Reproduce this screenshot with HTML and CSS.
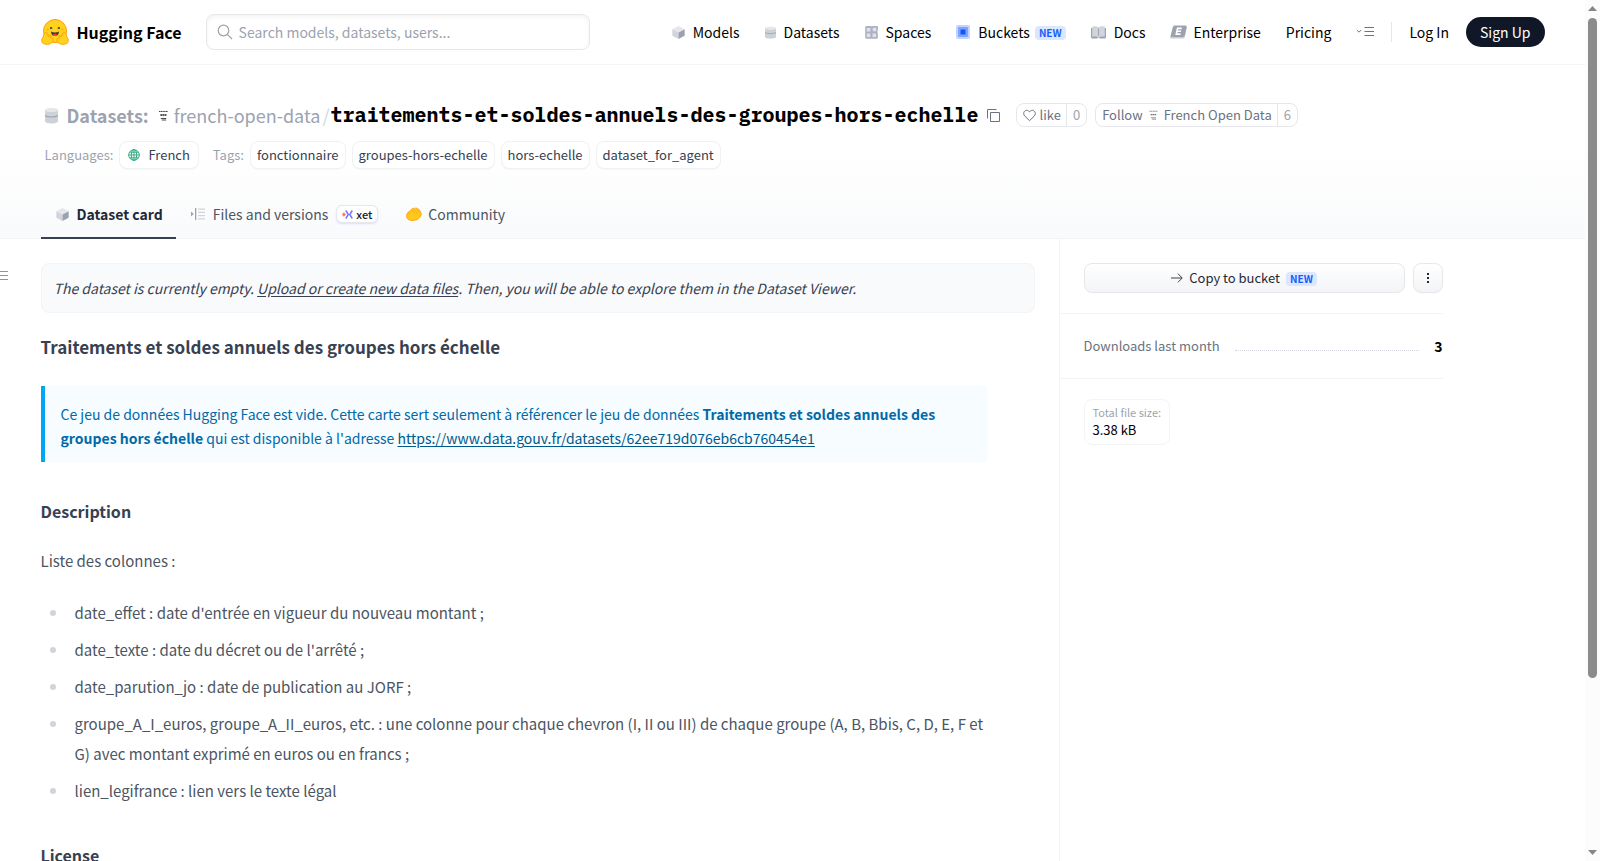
FILE: index.html
```html
<!DOCTYPE html>
<html lang="en">
<head>
<meta charset="utf-8">
<meta name="viewport" content="width=device-width, initial-scale=1">
<title>french-open-data/traitements-et-soldes-annuels-des-groupes-hors-echelle · Datasets at Hugging Face</title>
<link rel="stylesheet" href="styles.css">
</head>
<body>
<svg class="defs" aria-hidden="true">
  <symbol id="i-cube" viewBox="0 0 12 12"><path fill="#e5e7eb" d="M6 0l5.700 2.900L6 6 .3 2.900z"/><path fill="#d1d5db" d="M.3 2.900L6 6v6L.3 9z"/><path fill="#9ca3af" d="M11.700 2.900V9L6 12V6z"/></symbol>
  <symbol id="i-data" viewBox="0 0 12 16" preserveAspectRatio="none"><path fill="#e5e7eb" d="M0 2.500C0 .3 12 .3 12 2.500V8H0z"/><path fill="#cdd1d8" d="M0 3.500c2 1.600 10 1.600 12 0v10c0 2.800-12 2.800-12 0z"/><path fill="none" stroke="#9ca3af" d="M0 8c2 1.800 10 1.800 12 0"/></symbol>
  <symbol id="i-org" viewBox="0 0 10 12"><g fill="none" stroke="currentColor"><path stroke-dasharray="1.500 .4" d="M0 1.500h10"/><path stroke-width="1.700" stroke-dasharray="2 .4" d="M1.500 5.500h7"/><path d="M2 9.300h6M3 11h5" stroke-width=".9"/></g></symbol>
</svg>
<div class="shell">
<div class="page">
  <header class="topbar">
    <div class="container topbar-row">
      <a class="brand" href="#">
        <svg width="28" height="26" viewBox="0 0 28 26" aria-hidden="true"><circle cx="14" cy="12" r="11.500" fill="#ffd21e" stroke="#ff9d0b"/><path fill="#3a3b45" d="M9.300 8.300c.9-.9 2.300 0 2.200 1.500-.8-.7-1.200.8-1.900.3-.6-.4-.7-1.300-.3-1.800zm9.400 0c-.9-.9-2.300 0-2.200 1.500.8-.7 1.200.8 1.900.3.6-.4.7-1.300.3-1.800z"/><circle cx="6.600" cy="10.400" r="1" fill="#ffad03"/><circle cx="21.400" cy="10.400" r="1" fill="#ffad03"/><path fill="#3a3b45" d="M10 12.500c2.500 1.300 5.500 1.300 8 0 0 3-1.800 4.500-4 4.500s-4-1.500-4-4.500z"/><path fill="#f94040" d="M11.500 15.900c1.500-1.400 3.500-1.400 5 0-1.300 1.300-3.700 1.300-5 0z"/><path fill="#ffd21e" stroke="#ff9d0b" stroke-width=".9" d="M4.500 13.500c1.300-.5 1.700 1 2 3 .6-1 1.600-.9 1.500.2l-.1 1c1-1.700 2.700-1.500 2.200.2l-.6 1.200c2.300-1.200 3.300 1.500 1.900 4-1.600 2.600-6 2.700-8.700 1.600-1.400-.6-2.500-1.800-1.800-2.900-.7-.9-.3-1.800.5-2-.5-1 .1-1.800 1-1.800-.1-2 .9-4.200 2.100-4.500zm19 0c-1.300-.5-1.700 1-2 3-.6-1-1.600-.9-1.500.2l.1 1c-1-1.700-2.700-1.500-2.200.2l.6 1.200c-2.300-1.200-3.300 1.500-1.900 4 1.600 2.600 6 2.700 8.700 1.600 1.400-.6 2.500-1.800 1.800-2.900.7-.9.3-1.800-.5-2 .5-1-.1-1.800-1-1.800.1-2-.9-4.200-2.100-4.500z"/></svg>
        <span>Hugging Face</span>
      </a>
      <div class="search">
        <svg width="16" height="16" viewBox="0 0 16 16" fill="none" stroke="#9ca3af" stroke-width="1.200" aria-hidden="true"><circle cx="6.500" cy="6.500" r="5.300"/><path d="M10.300 10.300l4.700 4.700"/></svg>
        <input type="search" aria-label="Search" placeholder="Search models, datasets, users...">
      </div>
      <nav class="nav" aria-label="Main">
        <a href="#"><svg width="13" height="13"><use href="#i-cube"/></svg>Models</a>
        <a href="#"><svg width="11" height="13"><use href="#i-data"/></svg>Datasets</a>
        <a href="#"><svg width="13" height="13" viewBox="0 0 13 13"><path fill="#adb3c2" d="M1 0h5.500v.8A3.400 3.400 0 0 1 12.800 4c0 1-.4 1.800-.8 2.300h.8V12l-.8.800H1L.2 12V1z"/><g fill="#dfe2e8"><rect x="1.800" y="2" width="3.500" height="3.500"/><rect x="1.800" y="7.500" width="3.500" height="3.500"/><rect x="7.500" y="7.500" width="3.500" height="3.500"/><circle cx="9.500" cy="3.600" r="2"/></g></svg>Spaces</a>
        <a href="#"><svg width="14" height="14" viewBox="0 0 14 14"><rect width="14" height="14" rx="2" fill="#c3d5ff"/><rect x="2" y="2" width="10" height="10" rx="1" fill="#7ca5ff"/><rect x="4.500" y="4.500" width="5" height="5" rx=".5" fill="#1456f5"/></svg>Buckets <span class="new">NEW</span></a>
        <a href="#"><svg width="15" height="13" viewBox="0 0 15 13"><path fill="#9ca3af" d="M0 2h15v9.500l-1 1H9l-1.500-1-1.500 1H1l-1-1z"/><path fill="#d1d5db" d="M1.200.8C3.500 0 6 .2 7.500 1.500 9 .2 11.500 0 13.800.8v10c-2.300-.6-4.800-.4-6.300.9-1.500-1.300-4-1.500-6.300-.9z"/><path stroke="#9ca3af" d="M7.500 2.500v7.300"/></svg>Docs</a>
        <a href="#" class="tight"><svg width="17" height="14" viewBox="0 0 17 14"><path fill="#c9cdd6" d="M3 3l14-1-2 9.500c-.3 1.500-1 2-2.300 2H1.500C.3 13.500 0 13 .2 12z"/><path fill="#9ca3af" d="M5.500.5h9.800c1.200 0 1.500.8 1.300 1.700l-1.800 8c-.3 1.200-1 1.800-2.200 1.800H2C.8 12 .6 11.300.8 10.400l1.900-8C3 1.100 4 .5 5.500.5z"/><path fill="none" stroke="#fff" stroke-width="1.600" d="M11.800 3.400H7.600L6.300 9.100h4.200M7 6.200h4"/></svg>Enterprise</a>
        <a href="#">Pricing</a>
      </nav>
      <button class="more" aria-label="More"><svg width="18" height="12" viewBox="0 0 18 12" fill="none" stroke="#6b7280"><path d="M.8 4l2.200 2.200L5.200 4M8.500 1.500H18M8.500 5.500H18M8.500 9.500H18"/></svg></button>
      <span class="sep"></span>
      <a class="login" href="#">Log In</a>
      <a class="signup" href="#">Sign Up</a>
    </div>
  </header>

  <section class="hero">
    <div class="container">
      <div class="title-row">
        <svg class="title-icon" width="13" height="17"><use href="#i-data"/></svg>
        <a class="kind" href="#">Datasets:</a>
        <svg class="org" width="9" height="11"><use href="#i-org"/></svg>
        <a class="owner" href="#">french-open-data</a>
        <span class="slash">/</span>
        <h1><a href="#">traitements-et-soldes-annuels-des-groupes-hors-echelle</a></h1>
        <button class="copy" aria-label="Copy dataset name"><svg width="13" height="13" viewBox="0 0 13 13" fill="none" stroke="#6b7280"><path d="M3.500 3.500h9v9h-9zM.5 9.500v-9h9"/></svg></button>
        <div class="pill like">
          <button><svg width="13" height="13" viewBox="0 0 13 13" fill="none" stroke="#6b7280"><path d="M6.500 11.700L1.600 6.900C-.7 4.100 1.800.4 4.700 1.500c.7.300 1.300.8 1.800 1.400.5-.6 1.100-1.100 1.800-1.400 2.900-1.100 5.400 2.600 3.100 5.400z"/></svg>like</button><a href="#">0</a>
        </div>
        <div class="pill">
          <button>Follow <svg class="grey" width="9" height="10"><use href="#i-org"/></svg>French Open Data</button><a href="#">6</a>
        </div>
      </div>
      <div class="tags">
        <span class="label">Languages:</span>
        <a class="tag lang" href="#"><svg width="12" height="12" viewBox="0 0 12 12" fill="none" stroke="#36ab83"><circle cx="6" cy="6" r="5.300"/><path d="M6 .5v11M.5 6h11M1.500 3.200h9M1.500 8.800h9" /><ellipse cx="6" cy="6" rx="2.700" ry="5.300"/></svg>French</a>
        <span class="label tags-label">Tags:</span>
        <a class="tag" href="#">fonctionnaire</a>
        <a class="tag" href="#">groupes-hors-echelle</a>
        <a class="tag" href="#">hors-echelle</a>
        <a class="tag" href="#">dataset_for_agent</a>
      </div>
      <nav class="tabs" aria-label="Dataset">
        <a class="tab active" href="#"><svg width="13" height="13"><use href="#i-cube"/></svg>Dataset card</a>
        <a class="tab" href="#"><svg width="14" height="12" viewBox="0 0 14 12"><path fill="#9ca3af" d="M0 3.500L2.800 6 0 8.500zM4 0h1.300v12H4z"/><path stroke="#cfd3da" stroke-width="1.300" d="M7 1.200h7M7 4.400h7M7 7.600h7M7 10.800h7"/></svg>Files and versions
          <span class="xet"><svg width="11" height="9" viewBox="0 0 11 9" fill="none"><path fill="#ff7a59" d="M1.800 2.300L4 4.500 1.800 6.700 0 4.500z"/><path stroke="#7875ff" stroke-width="1.500" d="M3.800.5L6.300 4.500 3.800 8.500M10.300.5L7.800 4.500l2.500 4"/></svg>xet</span></a>
        <a class="tab community" href="#"><svg width="16" height="14" viewBox="0 0 16 14"><path fill="#ffc91c" stroke="#ffa41c" d="M3 4.800L6.300 1.500c1-.9 2.100 0 1.700 1C9.500.3 11.400.6 11 2.200c1.700-.8 2.700.4 1.900 1.700 1.600-.4 2.300.9 1.600 1.900 1 .2 1.200 1.400.5 2.300-.2 1.700-2.500 4.700-6.800 5.200-3.500.5-6.300-.3-7.200-2.200-.8-1.800-.4-4 .7-5.200.1-.5.700-1.100 1.300-1.100z"/><path fill="none" stroke="#ffa41c" stroke-width=".8" d="M8 2.500L5.300 5.300M11 2.300L7.500 6M12.900 4L9.300 7.400M3 5v3"/></svg>Community</a>
      </nav>
    </div>
  </section>

  <div class="container content">
    <button class="toc" aria-label="Table of contents"><svg width="8" height="9" viewBox="0 0 8 9" stroke="#8d94a3"><path d="M0 .5h8M0 4.500h8M0 8.500h8"/></svg></button>
    <main class="main">
      <div class="notice">The dataset is currently empty. <a href="#">Upload or create new data files</a>. Then, you will be able to explore them in the Dataset Viewer.</div>
      <article class="prose">
        <h2>Traitements et soldes annuels des groupes hors échelle</h2>
        <blockquote>Ce jeu de données Hugging Face est vide. Cette carte sert seulement à référencer le jeu de données <strong>Traitements et soldes annuels des groupes hors échelle</strong> qui est disponible à l'adresse <a href="#">https://www.data.gouv.fr/datasets/62ee719d076eb6cb760454e1</a></blockquote>
        <h3>Description</h3>
        <p>Liste des colonnes :</p>
        <ul>
          <li>date_effet : date d'entrée en vigueur du nouveau montant ;</li>
          <li>date_texte : date du décret ou de l'arrêté ;</li>
          <li>date_parution_jo : date de publication au JORF ;</li>
          <li>groupe_A_I_euros, groupe_A_II_euros, etc. : une colonne pour chaque chevron (I, II ou III) de chaque groupe (A, B, Bbis, C, D, E, F et G) avec montant exprimé en euros ou en francs ;</li>
          <li>lien_legifrance : lien vers le texte légal</li>
        </ul>
        <h3>License</h3>
      </article>
    </main>
    <aside class="side">
      <div class="actions">
        <button class="btn grow"><svg width="12" height="10" viewBox="0 0 12 10" fill="none" stroke="#374151"><path d="M0 5h11M7 .7L11.200 5 7 9.300"/></svg>Copy to bucket <span class="new">NEW</span></button>
        <button class="btn kebab" aria-label="More actions"><svg width="2" height="10" viewBox="0 0 2 10" fill="#1f2937"><path d="M0 0h2v2H0zM0 4h2v2H0zM0 8h2v2H0z"/></svg></button>
      </div>
      <dl class="downloads"><dt>Downloads last month</dt><dd>3</dd></dl>
      <dl class="size"><dt>Total file size:</dt><dd>3.38 kB</dd></dl>
    </aside>
  </div>
</div>
<div class="scrollbar" aria-hidden="true">
  <svg width="9" height="5" viewBox="0 0 9 5"><path fill="#868686" d="M4.500 0L9 5H0z"/></svg>
  <div class="track"><div class="thumb"></div></div>
  <svg width="9" height="5" viewBox="0 0 9 5"><path fill="#868686" d="M4.500 5L9 0H0z"/></svg>
</div>
</div>
</body>
</html>
```
FILE: styles.css
```css
* { box-sizing: border-box; }
body {
  margin: 0;
  font: 14px/24px "Source Sans Pro", "Noto Sans CJK SC", "Noto Sans CJK JP", sans-serif;
  color: #000;
  background: #fff;
}
a { color: inherit; text-decoration: none; }
button { font: inherit; color: inherit; background: none; border: 0; padding: 0; cursor: pointer; }
svg { flex: none; display: block; }
dl, dd { margin: 0; }
.defs { position: absolute; width: 0; height: 0; }

.shell { display: flex; height: 100vh; }
.page { flex: 1; min-width: 0; overflow-y: auto; scrollbar-width: none; display: flex; flex-direction: column; }
.container { width: 100%; max-width: 1536px; margin: 0 auto; padding: 0 16px; }

.topbar { border-bottom: 1px solid #f3f4f6; flex: none; }
.topbar-row { display: flex; align-items: center; height: 64px; }
.brand { display: flex; align-items: center; gap: 8px; font-size: 16px; font-weight: 700; white-space: nowrap; }
.search {
  display: flex; align-items: center; gap: 6px;
  flex: 0 1 384px; margin-left: 24px; height: 36px; padding: 0 10px;
  border: 1px solid #e5e7eb; border-radius: 8px;
  box-shadow: inset 0 2px 4px rgba(0, 0, 0, .05);
}
.search input { flex: 1; min-width: 0; border: 0; outline: 0; background: none; font: inherit; padding: 0; }
.search input::placeholder { color: #9ca3af; opacity: 1; }
.nav { display: flex; align-items: center; gap: 25px; margin-left: auto; white-space: nowrap; }
.nav a { display: flex; align-items: center; gap: 8px; }
.nav .tight { gap: 6px; }
.new {
  font: 700 10px/14px "Noto Sans CJK SC", sans-serif;
  padding: 0 4px; border-radius: 4px;
  color: #155dfc; background: #dbe6ff;
}
.nav .new { margin: 2px 0 0 -3px; }
.more { margin-left: 25px; }
.sep { width: 1px; height: 20px; margin: 0 17px; background: #e5e7eb; }
.login { white-space: nowrap; }
.signup { margin-left: 17px; padding: 3px 14px; border-radius: 15px; color: #fff; background: #101828; white-space: nowrap; }

.hero { flex: none; border-bottom: 1px solid #f3f4f6; background: linear-gradient(#fff 50%, #f9fafb); }
.title-row { display: flex; align-items: center; margin-top: 34px; height: 32px; font-size: 18px; white-space: nowrap; }
.title-icon { margin: 0 9px 0 4px; }
.kind { font-weight: 700; color: #9ca3af; }
.org { margin: 0 6px 0 10px; color: #222; }
.owner { color: #9ca3af; }
.slash { color: #d1d5db; margin: 0 1px 0 2px; }
h1 { margin: 0; font: 700 20px/24px "IBM Plex Mono", "Liberation Mono", monospace; }
.copy { margin: 0 16px 0 8px; }
.pill { display: flex; margin-right: 8px; height: 24px; border: 1px solid #e5e7eb; border-radius: 8px; font-size: 13px; line-height: 22px; color: #6b7280; }
.pill button { display: flex; align-items: center; gap: 6px; padding: 0 5px 0 6px; }
.pill.like button { gap: 4px; }
.pill a { border-left: 1px solid #e5e7eb; padding: 0 6px; color: #9ca3af; }
.grey { color: #777; }

.tags { display: flex; align-items: center; gap: 6px; margin-top: 10px; height: 28px; padding-left: 4px; font-size: 13px; white-space: nowrap; }
.label { color: #9ca3af; }
.tags-label { margin-left: 8px; }
.tag { height: 28px; padding: 0 6px; line-height: 26px; border: 1px solid #f0f1f3; border-radius: 8px; color: #374151; background: #fff; box-shadow: 0 1px 1px rgba(0, 0, 0, .03); }
.lang { display: flex; align-items: center; gap: 8px; padding: 0 8px; }

.tabs { display: flex; margin: 22px 0 -1px; height: 48px; }
.tab { display: flex; align-items: center; gap: 8px; padding: 0 13px 0 15px; color: #4b5563; border-bottom: 2px solid transparent; white-space: nowrap; }
.tab.active { font-weight: 700; color: #1f2937; border-color: #374151; }
.community { gap: 6px; }
.xet { display: flex; align-items: center; gap: 3px; height: 18px; padding: 0 5px; border: 1px solid #e5e7eb; border-radius: 6px; font-size: 11px; font-weight: 500; color: #111827; background: #fff; box-shadow: 0 1px 2px #dcdcff; }

.content { position: relative; display: flex; flex: 1 0 auto; }
.toc { position: absolute; left: -25px; top: 32px; }
.main { flex: 0 1 1018px; min-width: 0; padding: 24px 24px 0 0; }
.notice { padding: 12px; border: 1px solid #f3f4f6; border-radius: 8px; background: #f9fafb; color: #374151; font-style: italic; }
.notice a { text-decoration: underline; text-underline-offset: 2px; }
.prose { padding-right: 48px; color: #4b5563; }
.prose h2 { margin: 22px 0 27px; font-size: 17px; line-height: 24px; font-weight: 700; color: #374151; }
.prose blockquote { margin: 0; padding: 16px 16px 12px; border-left: 4px solid #00a6f4; background: #f6fcff; color: #0069a8; }
.prose blockquote a { color: #00598a; text-decoration: underline; text-underline-offset: 2px; }
.prose h3 { margin: 35px 0 24px; font-size: 16px; line-height: 28px; font-weight: 700; color: #374151; }
.prose p { margin: 0; font-size: 15px; }
.prose ul { list-style: none; margin: 25px 0 0; padding: 0; font-size: 15px; line-height: 30px; }
.prose li { display: flex; margin-bottom: 7px; }
.prose li::before { content: ""; flex: none; width: 6px; height: 6px; margin: 12px 19px 0 9px; border-radius: 50%; background: #d1d5db; }
.side { flex: 0 0 384px; border-left: 1px solid #f3f4f6; }
.actions { display: flex; gap: 8px; padding: 24px 0 20px 24px; }
.btn { display: flex; align-items: center; justify-content: center; gap: 6px; height: 30px; border: 1px solid #e5e7eb; border-radius: 8px; background: linear-gradient(#fff, #f3f4f6); font-size: 13px; color: #1f2937; }
.btn .new { margin-top: 2px; }
.grow { flex: 1; }
.kebab { width: 30px; }
.downloads { display: flex; align-items: center; gap: 15px; height: 66px; margin-bottom: 20px; padding-left: 24px; border: solid #f3f4f6; border-width: 1px 0; }
.downloads dt { display: flex; flex: 1; align-items: center; gap: 15px; font-size: 13px; color: #6b7280; }
.downloads dt::after { content: ""; flex: 1; margin-top: 8px; border-bottom: 1px dotted #d1d5db; }
.downloads dd { font-weight: 700; }
.size { display: inline-block; margin-left: 24px; padding: 4px 8px; border: 1px solid #f3f4f6; border-radius: 8px; }
.size dt { font-size: 11px; line-height: 16px; color: #9ca3af; }
.size dd { font-size: 13px; line-height: 20px; }

.scrollbar { display: flex; flex-direction: column; align-items: center; gap: 7px; width: 15px; padding: 6px 0; background: #fcfcfc; }
.track { flex: 1; width: 9px; }
.thumb { height: 80%; border-radius: 5px; background: #8b8b8b; }
```
